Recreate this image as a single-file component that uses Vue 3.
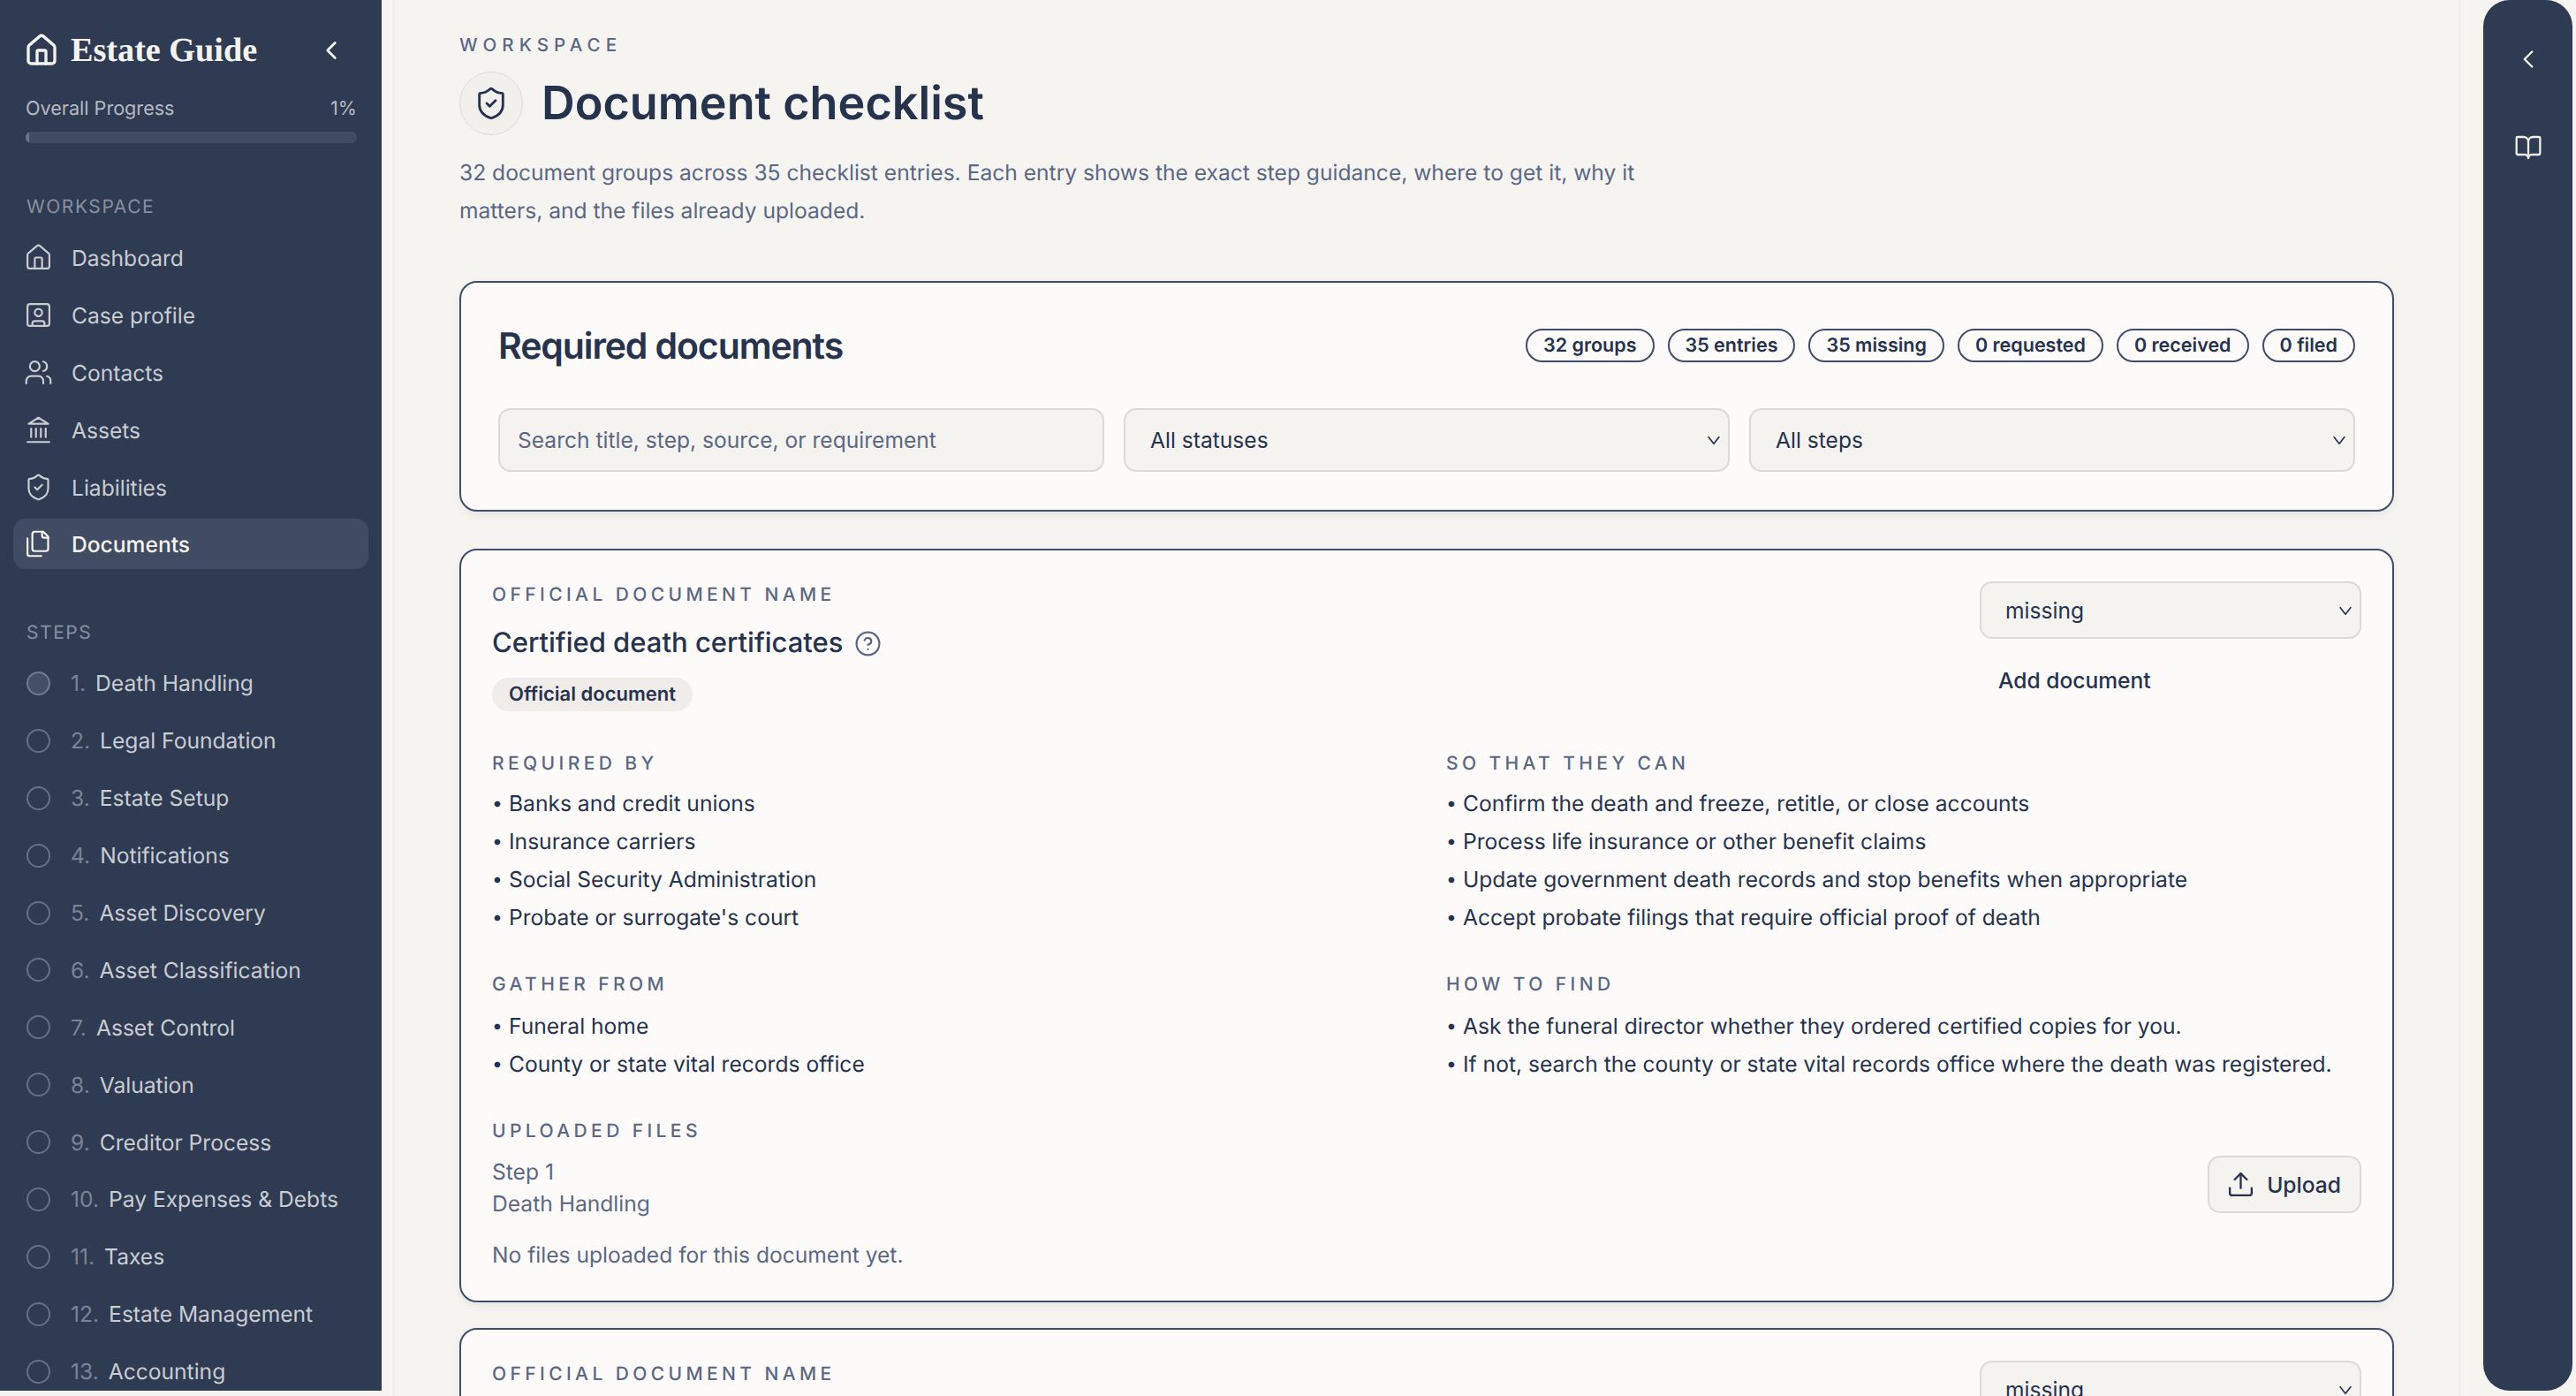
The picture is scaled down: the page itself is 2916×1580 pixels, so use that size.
<template>
  <div class="app">
    <aside class="sidebar">
      <div class="brand">
        <svg class="brand-icon" viewBox="0 0 24 24"><path d="M15 21v-8a1 1 0 0 0-1-1h-4a1 1 0 0 0-1 1v8" /><path d="M3 10a2 2 0 0 1 .709-1.528l7-5.999a2 2 0 0 1 2.582 0l7 5.999A2 2 0 0 1 21 10v9a2 2 0 0 1-2 2H5a2 2 0 0 1-2-2z" /></svg>
        <span class="brand-name">Estate Guide</span>
        <svg class="brand-chevron" viewBox="0 0 24 24"><path d="m15 18-6-6 6-6" /></svg>
      </div>
      <div class="progress">
        <div class="progress-label"><span>Overall Progress</span><span>1%</span></div>
        <div class="progress-track"><div class="progress-fill" :style="{ width: '1%' }"></div></div>
      </div>
      <div class="side-heading first">WORKSPACE</div>
      <nav class="nav">
        <a v-for="item in navItems" :key="item.label" class="nav-item" :class="{ active: item.active }">
          <svg class="nav-icon" viewBox="0 0 24 24">
            <template v-for="(d, i) in item.paths" :key="i"><path :d="d" /></template>
          </svg>
          <span>{{ item.label }}</span>
        </a>
      </nav>
      <div class="side-heading steps-heading">STEPS</div>
      <div class="steps">
        <div v-for="(s, i) in steps" :key="s" class="step">
          <span class="step-dot" :class="{ current: i === 0 }"></span>
          <span class="step-num">{{ i + 1 }}.</span>
          <span class="step-name">{{ s }}</span>
        </div>
      </div>
    </aside>

    <main class="main">
      <header class="page-head">
        <div class="eyebrow">WORKSPACE</div>
        <div class="title-row">
          <span class="title-icon">
            <svg viewBox="0 0 24 24"><path d="M20 13c0 5-3.5 7.5-7.66 8.95a1 1 0 0 1-.67-.01C7.5 20.5 4 18 4 13V6a1 1 0 0 1 1-1c2 0 4.5-1.2 6.24-2.72a1.17 1.17 0 0 1 1.52 0C14.51 3.81 17 5 19 5a1 1 0 0 1 1 1z" /><path d="m9 12 2 2 4-4" /></svg>
          </span>
          <h1>Document checklist</h1>
        </div>
        <p class="intro">32 document groups across 35 checklist entries. Each entry shows the exact step guidance, where to get it, why it matters, and the files already uploaded.</p>
      </header>

      <section class="card filter-card">
        <div class="filter-top">
          <h2>Required documents</h2>
          <div class="pills">
            <span v-for="p in pills" :key="p" class="pill">{{ p }}</span>
          </div>
        </div>
        <div class="filters">
          <input class="control search" type="text" placeholder="Search title, step, source, or requirement" />
          <div class="select-wrap">
            <select class="control select"><option>All statuses</option></select>
            <svg class="chev" viewBox="0 0 24 24"><path d="m5 8 7 9 7-9" /></svg>
          </div>
          <div class="select-wrap">
            <select class="control select"><option>All steps</option></select>
            <svg class="chev" viewBox="0 0 24 24"><path d="m5 8 7 9 7-9" /></svg>
          </div>
        </div>
      </section>

      <section class="card doc-card">
        <div class="doc-head">
          <div class="doc-title-block">
            <div class="label">OFFICIAL DOCUMENT NAME</div>
            <div class="doc-title">
              <h3>Certified death certificates</h3>
              <svg class="help" viewBox="0 0 24 24"><circle cx="12" cy="12" r="10" /><path d="M9.09 9a3 3 0 0 1 5.83 1c0 2-3 3-3 3" /><path d="M12 17h.01" /></svg>
            </div>
            <span class="tag">Official document</span>
          </div>
          <div class="doc-actions">
            <div class="select-wrap status-wrap">
              <select class="control select status"><option>missing</option></select>
              <svg class="chev" viewBox="0 0 24 24"><path d="m5 8 7 9 7-9" /></svg>
            </div>
            <button class="ghost">Add document</button>
          </div>
        </div>

        <div class="doc-grid">
          <div v-for="b in blocks" :key="b.label" class="block">
            <div class="label">{{ b.label }}</div>
            <ul>
              <li v-for="t in b.items" :key="t">{{ t }}</li>
            </ul>
          </div>
        </div>

        <div class="uploads">
          <div class="label">UPLOADED FILES</div>
          <div class="upload-row">
            <div class="step-ref"><div>Step 1</div><div>Death Handling</div></div>
            <button class="upload">
              <svg viewBox="0 0 24 24"><path d="M21 15v4a2 2 0 0 1-2 2H5a2 2 0 0 1-2-2v-4" /><path d="m17 8-5-5-5 5" /><path d="M12 3v12" /></svg>
              <span>Upload</span>
            </button>
          </div>
          <p class="none">No files uploaded for this document yet.</p>
        </div>
      </section>

      <section class="card doc-card">
        <div class="doc-head">
          <div class="doc-title-block">
            <div class="label">OFFICIAL DOCUMENT NAME</div>
          </div>
          <div class="doc-actions">
            <div class="select-wrap status-wrap">
              <select class="control select status"><option>missing</option></select>
              <svg class="chev" viewBox="0 0 24 24"><path d="m5 8 7 9 7-9" /></svg>
            </div>
          </div>
        </div>
      </section>
    </main>

    <aside class="rail">
      <svg class="rail-chevron" viewBox="0 0 24 24"><path d="m15 18-6-6 6-6" /></svg>
      <svg class="rail-book" viewBox="0 0 24 24"><path d="M12 7v14" /><path d="M3 18a1 1 0 0 1-1-1V4a1 1 0 0 1 1-1h5a4 4 0 0 1 4 4 4 4 0 0 1 4-4h5a1 1 0 0 1 1 1v13a1 1 0 0 1-1 1h-6a3 3 0 0 0-3 3 3 3 0 0 0-3-3z" /></svg>
    </aside>
  </div>
</template>

<script setup>
const navItems = [
  { label: 'Dashboard', paths: ['M15 21v-8a1 1 0 0 0-1-1h-4a1 1 0 0 0-1 1v8', 'M3 10a2 2 0 0 1 .709-1.528l7-5.999a2 2 0 0 1 2.582 0l7 5.999A2 2 0 0 1 21 10v9a2 2 0 0 1-2 2H5a2 2 0 0 1-2-2z'] },
  { label: 'Case profile', paths: ['M5 3h14a2 2 0 0 1 2 2v14a2 2 0 0 1-2 2H5a2 2 0 0 1-2-2V5a2 2 0 0 1 2-2z', 'M15 10a3 3 0 1 1-6 0 3 3 0 0 1 6 0z', 'M7 21v-2a2 2 0 0 1 2-2h6a2 2 0 0 1 2 2v2'] },
  { label: 'Contacts', paths: ['M16 21v-2a4 4 0 0 0-4-4H6a4 4 0 0 0-4 4v2', 'M13 7a4 4 0 1 1-8 0 4 4 0 0 1 8 0z', 'M22 21v-2a4 4 0 0 0-3-3.87', 'M16 3.13a4 4 0 0 1 0 7.75'] },
  { label: 'Assets', paths: ['M3 22h18', 'M6 18v-7', 'M10 18v-7', 'M14 18v-7', 'M18 18v-7', 'M12 2l8 5H4z'] },
  { label: 'Liabilities', paths: ['M20 13c0 5-3.5 7.5-7.66 8.95a1 1 0 0 1-.67-.01C7.5 20.5 4 18 4 13V6a1 1 0 0 1 1-1c2 0 4.5-1.2 6.24-2.72a1.17 1.17 0 0 1 1.52 0C14.51 3.81 17 5 19 5a1 1 0 0 1 1 1z', 'm9 12 2 2 4-4'] },
  { label: 'Documents', active: true, paths: ['M20 7h-3a2 2 0 0 1-2-2V2', 'M9 18a2 2 0 0 1-2-2V4a2 2 0 0 1 2-2h7l4 4v10a2 2 0 0 1-2 2Z', 'M3 7.6v12.8A1.6 1.6 0 0 0 4.6 22h9.8'] },
]

const steps = ['Death Handling', 'Legal Foundation', 'Estate Setup', 'Notifications', 'Asset Discovery', 'Asset Classification', 'Asset Control', 'Valuation', 'Creditor Process', 'Pay Expenses & Debts', 'Taxes', 'Estate Management', 'Accounting']

const pills = ['32 groups', '35 entries', '35 missing', '0 requested', '0 received', '0 filed']

const blocks = [
  { label: 'REQUIRED BY', items: ['Banks and credit unions', 'Insurance carriers', 'Social Security Administration', "Probate or surrogate's court"] },
  { label: 'SO THAT THEY CAN', items: ['Confirm the death and freeze, retitle, or close accounts', 'Process life insurance or other benefit claims', 'Update government death records and stop benefits when appropriate', 'Accept probate filings that require official proof of death'] },
  { label: 'GATHER FROM', items: ['Funeral home', 'County or state vital records office'] },
  { label: 'HOW TO FIND', items: ['Ask the funeral director whether they ordered certified copies for you.', 'If not, search the county or state vital records office where the death was registered.'] },
]
</script>

<style>
html, body { margin: 0; background: #f5f4f1; }
</style>

<style scoped>
.app {
  display: flex;
  height: 1580px;
  overflow: hidden;
  background: #f5f4f1;
  font-family: Inter, "Liberation Sans", sans-serif;
  color: #27324d;
  text-rendering: geometricPrecision;
  -webkit-font-smoothing: antialiased;
}
svg { fill: none; stroke: currentColor; stroke-width: 2; stroke-linecap: round; stroke-linejoin: round; flex: none; }

/* Sidebar */
.sidebar {
  flex: none;
  width: 432px;
  height: 1574px;
  overflow: hidden;
  background: #2f3b52;
  color: #c9ccd3;
  box-sizing: border-box;
}
.brand { display: flex; align-items: center; height: 114px; padding: 0 30px 0 27px; box-sizing: border-box; }
.brand-icon { width: 40px; height: 40px; color: #f5f3ef; }
.brand-name { margin-left: 13px; font-family: "Liberation Serif", serif; font-weight: 700; font-size: 38.2px; color: #f5f3ef; }
.brand-chevron { width: 34px; height: 34px; margin-left: auto; margin-right: 10px; color: #f5f3ef; }
.progress { padding: 0 28px 0 29px; }
.progress-label { display: flex; justify-content: space-between; font-size: 21.6px; line-height: 18px; color: #b4b9c4; }
.progress-track { margin-top: 17px; height: 13px; border-radius: 7px; background: #414b63; overflow: hidden; }
.progress-fill { height: 100%; background: #6d768c; }
.side-heading { padding-left: 30px; font-size: 21px; line-height: 28px; letter-spacing: 1.55px; color: #888fa1; }
.side-heading.first { margin-top: 59px; }
.nav { margin-top: 10px; display: flex; flex-direction: column; padding: 0 15px; }
.nav-item { display: flex; align-items: center; height: 65px; padding-left: 12px; font-size: 24.6px; color: #c9ccd3; box-sizing: border-box; }
.nav-item.active { height: 57px; margin-top: 3px; border-radius: 14px; background: #414b63; color: #f5f3ef; font-weight: 500; }
.nav-icon { width: 33px; height: 33px; margin-right: 21px; stroke-width: 1.6; }
.steps-heading { margin-top: 59px; }
.steps { margin-top: 10px; display: flex; flex-direction: column; }
.step { display: flex; align-items: center; height: 64.9px; padding-left: 30px; font-size: 24.6px; flex: none; }
.step-dot { flex: none; width: 27px; height: 27px; box-sizing: border-box; border-radius: 50%; border: 2px solid #667089; margin-right: 23px; }
.step-dot.current { background: #454f68; border-color: #727b93; }
.step-num { color: #7a8398; margin-right: 11px; }
.step-name { color: #c9ccd3; }

/* Main */
.main {
  flex: 1;
  min-width: 0;
  margin-left: 13px;
  padding: 0 73px;
  border-left: 2px solid #efede9;
  border-right: 2px solid #efede9;
  box-sizing: border-box;
}
.page-head { padding-top: 38px; }
.eyebrow { font-size: 20.5px; line-height: 25px; letter-spacing: 6.1px; font-weight: 500; color: #5c6883; }
.title-row { display: flex; align-items: center; gap: 21px; margin-top: 18px; }
.title-icon { width: 72px; height: 72px; box-sizing: border-box; border: 1px solid #dcdad6; border-radius: 50%; background: #f1f0ec; display: flex; align-items: center; justify-content: center; color: #27324d; }
.title-icon svg { width: 40px; height: 40px; stroke-width: 1.7; }
h1 { margin: -2px 0 0; font-size: 52.2px; line-height: 72px; font-weight: 600; letter-spacing: 0; color: #27324d; }
.intro { margin: 21px 0 0; max-width: 1340px; font-size: 24.6px; line-height: 43px; color: #5c6883; }

.card { background: #fcfbf9; border: 2px solid #414c68; border-radius: 20px; box-shadow: 0 4px 8px rgba(39, 50, 77, 0.07); box-sizing: border-box; }
.filter-card { margin-top: 58px; height: 261px; padding: 0 42px; }
.filter-top { display: flex; align-items: center; justify-content: space-between; height: 142px; }
h2 { margin: 0; font-size: 41px; font-weight: 600; letter-spacing: -1.1px; color: #27324d; }
.pills { display: flex; gap: 15px; }
.pill { height: 38px; padding: 0 18px; box-sizing: border-box; display: flex; align-items: center; border: 2px solid #414c68; border-radius: 19px; font-size: 21.5px; font-weight: 600; color: #27324d; }
.filters { display: grid; grid-template-columns: 1fr 1fr 1fr; gap: 22px; }
.control { width: 100%; height: 72px; box-sizing: border-box; background: #f4f3f0; border: 2px solid #dbdad7; border-radius: 14px; font: inherit; font-size: 24.6px; color: #27324d; outline: none; }
.search { padding: 0 20px; }
.search::placeholder { color: #5c6883; opacity: 1; }
.select { appearance: none; -webkit-appearance: none; padding: 0 28px; }
.select-wrap { position: relative; }
.chev { position: absolute; right: 8px; top: 50%; width: 20px; height: 20px; margin-top: -10px; stroke-width: 2; color: #27324d; pointer-events: none; }

.doc-card { margin-top: 42px; padding: 35px; height: 853px; }
.doc-card:last-child { height: auto; margin-top: 29px; }
.doc-head { display: flex; justify-content: space-between; }
.label { font-size: 21px; line-height: 26px; letter-spacing: 4.4px; font-weight: 500; color: #5c6883; }
.doc-title-block { padding-top: 3px; }
.doc-title { display: flex; align-items: center; gap: 12px; margin-top: 20px; }
h3 { margin: 0; font-size: 31px; line-height: 42px; font-weight: 500; color: #27324d; }
.help { width: 31px; height: 31px; color: #5c6883; stroke-width: 1.7; }
.tag { display: inline-flex; align-items: center; height: 38px; margin-top: 18px; padding: 0 19px; border-radius: 19px; background: #efecea; font-size: 22px; font-weight: 600; color: #27324d; }
.doc-actions { width: 432px; flex: none; }
.status { height: 65px; padding: 0 27px; }
.ghost { display: block; margin-top: 14px; height: 65px; padding: 0 21px; background: transparent; border: 0; font: inherit; font-size: 24.6px; font-weight: 500; color: #27324d; }

.doc-grid { display: grid; grid-template-columns: 1fr 1fr; column-gap: 44px; row-gap: 42px; margin-top: 47px; }
ul { list-style: none; margin: 10px 0 0; padding: 0; }
.block:nth-child(n + 3) ul { margin-top: 12px; }
li { position: relative; padding-left: 19px; font-size: 24.6px; line-height: 43px; color: #27324d; }
li::before { content: "•"; position: absolute; left: 0; font-size: 21px; }
.uploads { margin-top: 42px; }
.upload-row { display: flex; justify-content: space-between; align-items: flex-start; margin-top: 14px; }
.step-ref { font-size: 24.6px; line-height: 36px; color: #5c6883; }
.upload { display: flex; align-items: center; gap: 13px; height: 65px; padding: 0 21px 0 19px; box-sizing: border-box; background: #f4f3f0; border: 2px solid #dbdad7; border-radius: 14px; font: inherit; font-size: 24.6px; font-weight: 500; color: #27324d; }
.upload svg { width: 33px; height: 33px; stroke-width: 1.7; }
.none { margin: 22px 0 0; font-size: 24.6px; line-height: 36px; color: #5c6883; }

/* Right rail */
.rail { flex: none; width: 101px; height: 1574px; margin: 0 4px 0 26px; border-radius: 30px; background: #2f3b52; color: #f1efeb; display: flex; flex-direction: column; align-items: center; }
.rail-chevron { width: 34px; height: 34px; margin-top: 50px; stroke-width: 1.7; }
.rail-book { width: 32px; height: 32px; margin-top: 67px; stroke-width: 1.7; }
</style>
